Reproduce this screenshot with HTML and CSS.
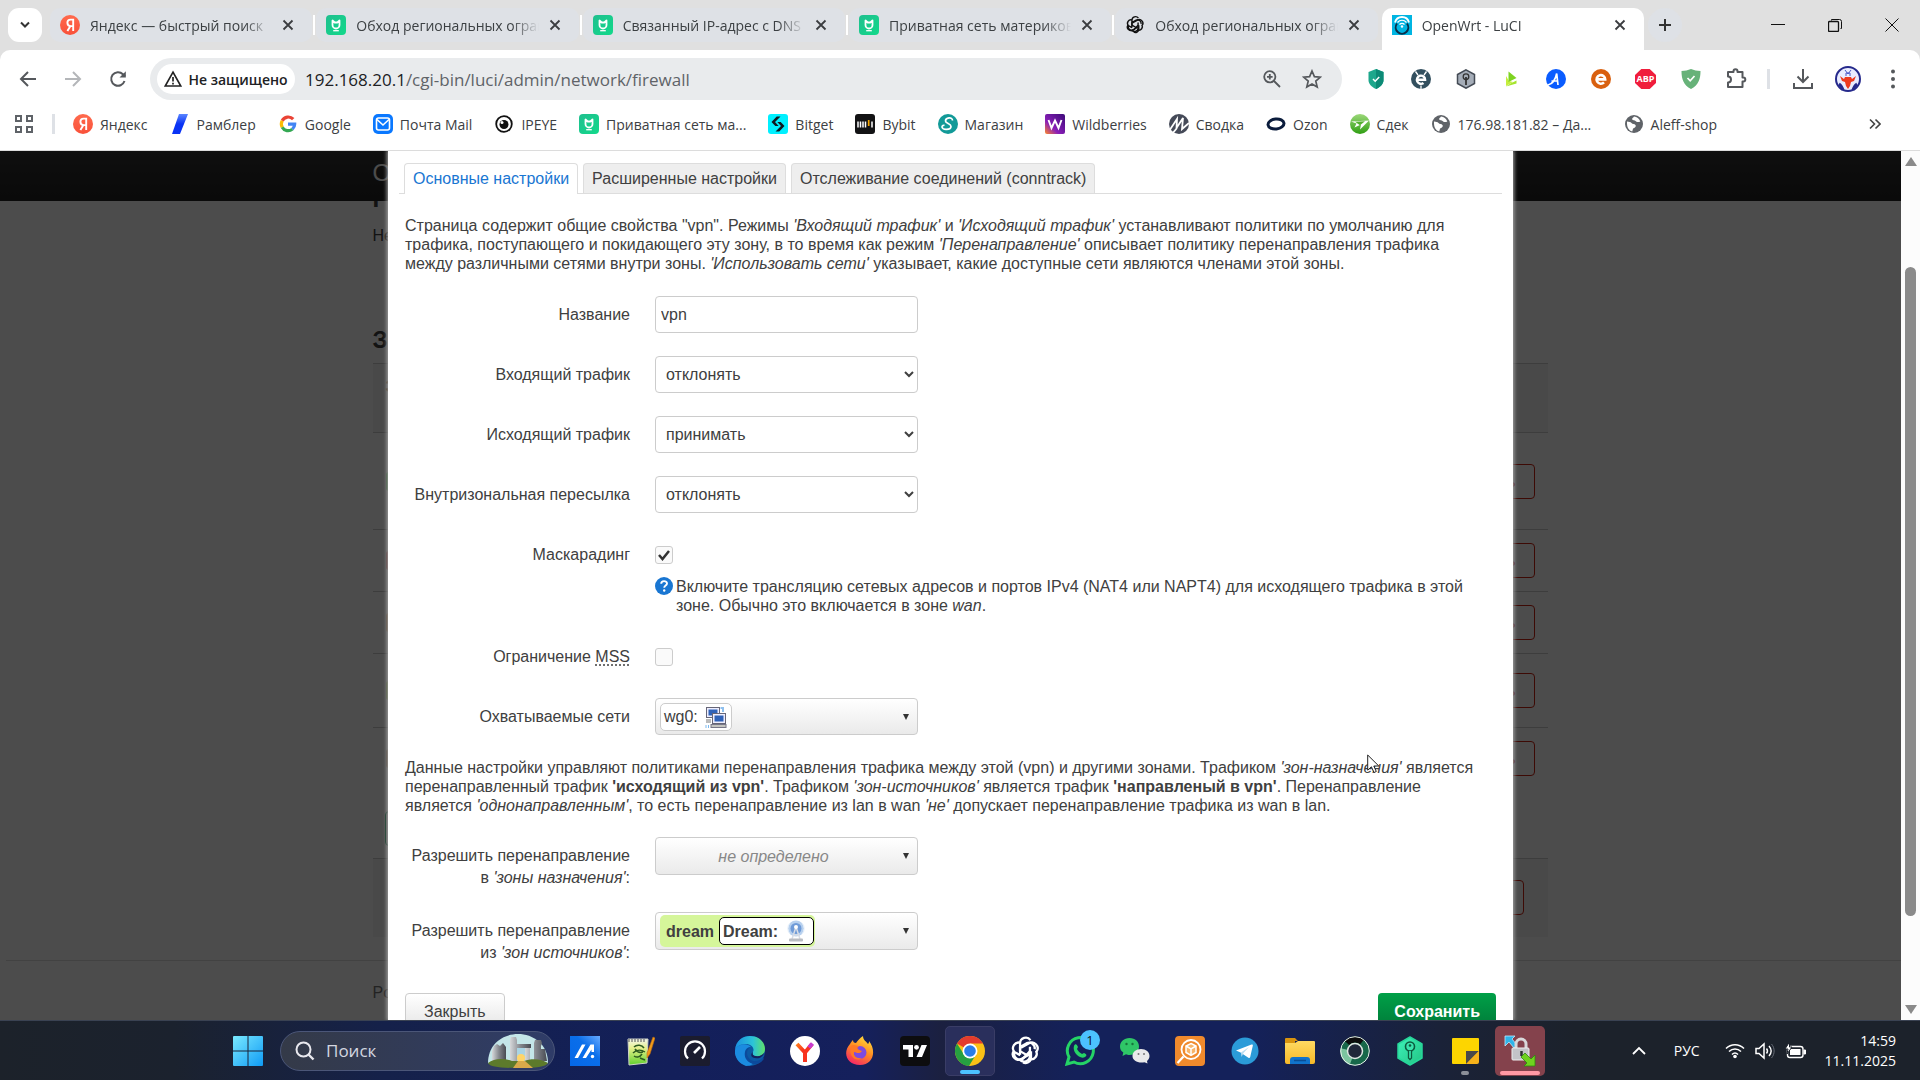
FILE: index.html
```html
<!DOCTYPE html>
<html lang="ru">
<head>
<meta charset="utf-8">
<title>OpenWrt - LuCI</title>
<link rel="stylesheet" href="styles.css">
</head>
<body>
<svg class="defs" width="0" height="0" aria-hidden="true">
  <defs>
    <linearGradient id="g-ya" x2="0" y2="1"><stop stop-color="#ff6a4d"/><stop offset="1" stop-color="#f9513a"/></linearGradient>
    <linearGradient id="g-mi" x2="1" y2="1"><stop stop-color="#1fbf8f"/><stop offset="1" stop-color="#12d98a"/></linearGradient>
    <linearGradient id="g-ram" x2="0" y2="1"><stop stop-color="#5b86ff"/><stop offset=".5" stop-color="#0a33f5"/><stop offset="1" stop-color="#0a33f5"/></linearGradient>
    <linearGradient id="g-wb" x1="0" y1="1" x2="1" y2="0"><stop stop-color="#ff8a2a"/><stop offset=".35" stop-color="#8a1fb8"/><stop offset="1" stop-color="#3c0a78"/></linearGradient>
    <linearGradient id="g-win" x2="1" y2="1"><stop stop-color="#7ae9ff"/><stop offset="1" stop-color="#0f9bf5"/></linearGradient>
    <linearGradient id="g-edge" x2="1" y2="0"><stop stop-color="#1a8fe0"/><stop offset=".6" stop-color="#2cc3d8"/><stop offset="1" stop-color="#5fe06a"/></linearGradient>
    <linearGradient id="g-ff" x1=".8" y1="0" x2=".3" y2="1"><stop stop-color="#ffe23e"/><stop offset=".5" stop-color="#ff8a22"/><stop offset="1" stop-color="#f52667"/></linearGradient>
    <linearGradient id="g-asus" x1="0" y1="1" x2="1" y2="0"><stop stop-color="#0568e8"/><stop offset=".6" stop-color="#0a6eea"/><stop offset="1" stop-color="#68abff"/></linearGradient>
    <linearGradient id="g-yb" x2="1" y2="1"><stop stop-color="#ff7a1a"/><stop offset=".4" stop-color="#f8331e"/><stop offset="1" stop-color="#f8331e"/></linearGradient>
    <linearGradient id="g-fold" x2="0" y2="1"><stop stop-color="#ffda62"/><stop offset="1" stop-color="#f7b928"/></linearGradient>
    <linearGradient id="g-key" x2="1" y2="1"><stop stop-color="#3ef2ba"/><stop offset="1" stop-color="#22c483"/></linearGradient>
    <linearGradient id="g-sdek" x2="0" y2="1"><stop stop-color="#9cd87a"/><stop offset="1" stop-color="#2f9e12"/></linearGradient>
    <linearGradient id="g-stone" x2="1" y2="0"><stop stop-color="#d6d8da"/><stop offset=".5" stop-color="#84878d"/><stop offset="1" stop-color="#484b52"/></linearGradient>
    <linearGradient id="g-note" x2="0" y2="1"><stop stop-color="#f4f6ef"/><stop offset=".35" stop-color="#e6f08c"/><stop offset="1" stop-color="#5fd02c"/></linearGradient>
  </defs>
  <symbol id="i-x" viewBox="0 0 12 12"><path d="M1.500 1.500l9 9M10.500 1.500l-9 9" stroke="#3b3d40" stroke-width="1.800" fill="none"/></symbol>
  <symbol id="i-ya" viewBox="0 0 20 20"><circle cx="10" cy="10" r="10" fill="url(#g-ya)"/><path d="M13.200 16V4.600h-2.600c-2 0-3.200 1.300-3.200 3.200 0 1.900 1.200 3.300 3.400 3.300h2.200M10.300 11.200L7.400 16" stroke="#fff" stroke-width="1.900" fill="none"/></symbol>
  <symbol id="i-mi" viewBox="0 0 20 20"><rect width="20" height="20" rx="4" fill="url(#g-mi)"/><path d="M6.500 5.500v4.500a3.500 3.500 0 0 0 7 0V5.500l-2.200 2H8.700z" fill="none" stroke="#fff" stroke-width="1.800" stroke-linejoin="round"/><path d="M7.200 15.700h5.600" stroke="#fff" stroke-width="1.300"/></symbol>
  <symbol id="i-gpt" viewBox="0 0 24 24"><g fill="none" stroke="currentColor" stroke-width="1.700" stroke-linejoin="round"><path d="M13.900 15.300l-5.600-3.200V6.300a4.300 4.300 0 0 1 7.800-2.500M8.300 9l5-2.900a4.300 4.300 0 0 1 6 4.600"/><path d="M9 9.600l6-3.400a4.300 4.300 0 0 1 5.600 6.300"/><path d="M15.700 8.900v6.600a4.300 4.300 0 0 1-7.900 2.400"/><path d="M15.700 12.300l-5.400 5.600a4.300 4.300 0 0 1-6.300-4.800"/><path d="M15.200 14.600l-5.600 3.200A4.300 4.300 0 0 1 3.500 12"/><path d="M8.300 14.900V8.700M8.400 5.800A4.300 4.300 0 0 0 4 12.700l4.400 2.500"/><path d="M20.200 11.800a4.300 4.300 0 0 1-4.600 6.400"/><path d="M10.500 20.600a4.300 4.300 0 0 0 6-2.600v-5.800"/></g></symbol>
  <symbol id="i-globe" viewBox="0 0 20 20"><circle cx="10" cy="10" r="9" fill="#5f6368"/><path d="M3 7.500c2 .3 3.500.2 4.500 1.600 1 1.400 3 .6 4 1.800 1 1.400-.6 2.700-2 3.300-1 .6-.6 2-1.300 3.300C5 16.500 2.700 14 3 7.500zM10 2.500c-.8 1.500-2.300 1.700-1.800 3 .6 1.200 2.600.3 3.400 1.500.8 1.200 3 1.300 4.700.4C15.200 4.500 13 2.800 10 2.500z" fill="#fff"/></symbol>
  <symbol id="i-wrt" viewBox="0 0 20 20"><rect width="20" height="20" fill="#00b5e2"/><path d="M3 7.500C4 3.500 7 2 10 2s6 1.500 7 5.500" fill="none" stroke="#fff" stroke-width="1.800"/><path d="M5 8.500a6.300 6.300 0 1 0 10 0" fill="none" stroke="#0b2f4a" stroke-width="2"/><path d="M5.500 7.500c2.500-3 6.500-3 9 0M7.500 9.500c1.500-1.600 3.500-1.600 5 0" fill="none" stroke="#fff" stroke-width="1.200"/><circle cx="10" cy="11.500" r="1.200" fill="#fff"/></symbol>
</svg>

<header class="chrome">
  <div class="tabstrip">
    <button class="tabsearch" aria-label="Поиск вкладок"><svg width="12" height="12" viewBox="0 0 12 12"><path d="M2 3.500l4 4 4-4" fill="none" stroke="#333" stroke-width="2"/></svg></button>
    <div class="tabs">
      <div class="tab"><svg width="20" height="20"><use href="#i-ya"/></svg><span>Яндекс — быстрый поиск</span><button aria-label="Закрыть вкладку"><svg width="12" height="12"><use href="#i-x"/></svg></button></div>
      <div class="tab"><svg width="20" height="20"><use href="#i-mi"/></svg><span>Обход региональных ограничений</span><button aria-label="Закрыть вкладку"><svg width="12" height="12"><use href="#i-x"/></svg></button></div>
      <div class="tab"><svg width="20" height="20"><use href="#i-mi"/></svg><span>Связанный IP-адрес с DNS</span><button aria-label="Закрыть вкладку"><svg width="12" height="12"><use href="#i-x"/></svg></button></div>
      <div class="tab"><svg width="20" height="20"><use href="#i-mi"/></svg><span>Приватная сеть материковая</span><button aria-label="Закрыть вкладку"><svg width="12" height="12"><use href="#i-x"/></svg></button></div>
      <div class="tab last"><svg class="dark" width="20" height="20"><use href="#i-gpt"/></svg><span>Обход региональных ограничений</span><button aria-label="Закрыть вкладку"><svg width="12" height="12"><use href="#i-x"/></svg></button></div>
      <div class="tab active"><svg width="20" height="20"><use href="#i-wrt"/></svg><span>OpenWrt - LuCI</span><button aria-label="Закрыть вкладку"><svg width="12" height="12"><use href="#i-x"/></svg></button></div>
    </div>
    <button class="newtab" aria-label="Новая вкладка"><svg width="14" height="14" viewBox="0 0 14 14"><path d="M7 1v12M1 7h12" stroke="#333" stroke-width="2"/></svg></button>
    <div class="winbtns">
      <button aria-label="Свернуть"><svg width="14" height="14" viewBox="0 0 14 14"><path d="M0 6.500h14" stroke="#111"/></svg></button>
      <button aria-label="Свернуть в окно"><svg width="14" height="14" viewBox="0 0 14 14"><path d="M3.500 2.500v-1h8a2 2 0 0 1 2 2v7h-1" fill="none" stroke="#111"/><rect x=".5" y="3.500" width="10" height="10" rx="1" fill="none" stroke="#111" stroke-width="1.300"/></svg></button>
      <button aria-label="Закрыть"><svg width="14" height="14" viewBox="0 0 14 14"><path d="M.5.5l13 13M13.500.5l-13 13" stroke="#111"/></svg></button>
    </div>
  </div>

  <div class="toolbar">
    <div class="nav">
      <button aria-label="Назад"><svg width="20" height="20" viewBox="0 0 20 20"><path d="M18 10H3M10 3l-7 7 7 7" fill="none" stroke="#55585c" stroke-width="2"/></svg></button>
      <button aria-label="Вперёд"><svg width="20" height="20" viewBox="0 0 20 20"><path d="M2 10h15M10 3l7 7-7 7" fill="none" stroke="#b4b6b9" stroke-width="2"/></svg></button>
      <button aria-label="Обновить"><svg width="20" height="20" viewBox="0 0 20 20"><path d="M16.500 12a6.800 6.800 0 1 1-1.600-6.800L17 7.300" fill="none" stroke="#55585c" stroke-width="2"/><path d="M17.800 2.200v6.300h-6.300z" fill="#55585c"/></svg></button>
    </div>
    <div class="omnibox">
      <button class="insecure"><svg width="18" height="18" viewBox="0 0 18 18"><path d="M9 2.200L16.800 16H1.200z" fill="none" stroke="#222" stroke-width="1.700"/><path d="M9 7v4.500M9 12.700v1.800" stroke="#222" stroke-width="1.700"/></svg>Не защищено</button>
      <span class="url"><b>192.168.20.1</b>/cgi-bin/luci/admin/network/firewall</span>
      <button aria-label="Масштаб"><svg width="20" height="20" viewBox="0 0 20 20"><circle cx="7.800" cy="7.800" r="5.600" fill="none" stroke="#55585c" stroke-width="1.800"/><path d="M12 12l6 6M7.800 5v5.600M5 7.800h5.600" stroke="#55585c" stroke-width="1.800"/></svg></button>
      <button aria-label="Добавить в закладки"><svg width="20" height="20" viewBox="0 0 20 20"><path d="M10 2l2.400 5.600 6 .5-4.600 4 1.400 5.900L10 14.900 4.800 18l1.400-5.900-4.600-4 6-.5z" fill="none" stroke="#55585c" stroke-width="1.700"/></svg></button>
    </div>
    <div class="exts">
      <button aria-label="Щит"><svg width="20" height="20" viewBox="0 0 20 20"><path d="M10 0l7.500 3v8c0 4-3 7-7.500 9-4.500-2-7.500-5-7.500-9V3z" fill="#1da78c"/><path d="M10 0l7.500 3v8c0 4-3 7-7.500 9z" fill="#0c8a76"/><path d="M7 10l2.200 2.200L13.200 8" fill="none" stroke="#fff" stroke-width="1.500"/></svg></button>
      <button aria-label="Сканер"><svg width="20" height="20" viewBox="0 0 20 20"><circle cx="10" cy="10" r="10" fill="#33505f"/><path d="M6.200 10.700h7.900A4.100 4.100 0 1 0 12.500 14" fill="none" stroke="#fff" stroke-width="2.400"/><path d="M4.500 2.500L7 6M15.500 2.500L13 6M10 16.500V20" stroke="#fff" stroke-width="1.300"/></svg></button>
      <button aria-label="Ключ"><svg width="20" height="20" viewBox="0 0 20 20"><path d="M10 .8l8.500 4.700v9L10 19.200 1.500 14.500v-9z" fill="#a5adb8" stroke="#444b55" stroke-width="1.500"/><circle cx="10" cy="7.700" r="2.800" fill="none" stroke="#333" stroke-width="1.300"/><path d="M10 8v8" stroke="#333" stroke-width="1.800"/></svg></button>
      <button aria-label="Воспроизвести"><svg width="20" height="20" viewBox="0 0 20 20"><path d="M5 7v10l7-4-4-1z" fill="#c5ee3c"/><path d="M7.500 2.500l8 6.500-8 4z" fill="#7ed321"/><path d="M5 17.500l10.500-3v-3l-6 3z" fill="#a5e52c"/></svg></button>
      <button aria-label="Переводчик"><svg width="20" height="20" viewBox="0 0 20 20"><circle cx="10" cy="10" r="10" fill="#0a5cff"/><path d="M2 16c4-1 7.500-5.500 8.700-11.500L12 16M5.500 12h6.500" fill="none" stroke="#fff" stroke-width="1.700"/></svg></button>
      <button aria-label="Кэшбэк"><svg width="20" height="20" viewBox="0 0 20 20"><circle cx="10" cy="10" r="10" fill="#d9600f"/><path d="M5.700 10.400h8.500A4.300 4.300 0 1 0 13 13.400" fill="none" stroke="#fff" stroke-width="2.600"/></svg></button>
      <button class="abp"><span>ABP</span></button>
      <button aria-label="Защита"><svg width="20" height="20" viewBox="0 0 20 20"><path d="M10 0c3 1.200 6 2 9.500 2 0 8-2 14-9.500 18C2.500 16 .5 10 .5 2 4 2 7 1.200 10 0z" fill="#67b279"/><path d="M6.500 9l2.700 2.800L13.500 7" fill="none" stroke="#fff" stroke-width="1.700"/></svg></button>
      <button aria-label="Расширения"><svg width="22" height="22" viewBox="0 0 22 22"><path d="M3 4h5.500V3.200a2 2 0 0 1 4 0V4h5v5.500h.8a2 2 0 0 1 0 4h-.8V19H3v-4.500a3 3 0 0 0 0-6z" fill="none" stroke="#55585c" stroke-width="2" stroke-linejoin="round"/></svg></button>
    </div>
    <i class="vline"></i>
    <div class="exts">
      <button aria-label="Загрузки"><svg width="20" height="20" viewBox="0 0 20 20"><path d="M10 0v12M4.500 7.500L10 13l5.500-5.500M1 14v5h18v-5" fill="none" stroke="#55585c" stroke-width="2"/></svg></button>
      <button aria-label="Профиль"><svg width="26" height="26" viewBox="0 0 26 26"><circle cx="13" cy="13" r="12" fill="#e9ecff" stroke="#262a8c" stroke-width="2"/><path d="M4 18c2 1 3 3 4 6M22 18c-2 1-3 3-4 6" stroke="#262a8c" stroke-width="3" fill="none"/><path d="M5 10l4 3 1-2h6l1 2 4-3-2 5-3 1-1 4-2 3-2-3-1-4-3-1z" fill="#ee3a1f"/><path d="M10 4l3 4 3-4M11 10V7h4v3" stroke="#4a58c8" fill="none"/></svg></button>
      <button aria-label="Меню"><svg width="20" height="20" viewBox="0 0 20 20"><g fill="#55585c"><circle cx="10" cy="2.500" r="2"/><circle cx="10" cy="10" r="2"/><circle cx="10" cy="17.500" r="2"/></g></svg></button>
    </div>
  </div>

  <nav class="bookmarks">
    <button class="apps" aria-label="Сервисы"><svg width="18" height="18" viewBox="0 0 18 18"><path d="M1 1h5v5H1zM12 1h5v5h-5zM1 12h5v5H1zM12 12h5v5h-5z" fill="none" stroke="#5f6368" stroke-width="2"/></svg></button>
    <i class="vline"></i>
    <div class="marks">
      <a href="#"><svg width="20" height="20"><use href="#i-ya"/></svg>Яндекс</a>
      <a href="#"><svg width="20" height="20" viewBox="0 0 20 20"><path d="M9 0h9l-8 20H2z" fill="url(#g-ram)"/></svg>Рамблер</a>
      <a href="#"><svg width="20" height="20" viewBox="0 0 20 20"><g fill="none" stroke-width="3.200"><path d="M15.200 5.200A6.700 6.700 0 0 0 4.200 6.800" stroke="#ea4335"/><path d="M4.200 6.800a6.700 6.700 0 0 0 0 6.400" stroke="#fbbc05"/><path d="M4.200 13.200a6.700 6.700 0 0 0 10.200 1.900" stroke="#34a853"/><path d="M14.400 15.100a6.500 6.500 0 0 0 2.300-5H10" stroke="#4285f4"/></g></svg>Google</a>
      <a href="#"><svg width="20" height="20" viewBox="0 0 20 20"><rect width="20" height="20" rx="5" fill="#0a78ff"/><rect x="3.500" y="4" width="13" height="12" rx="2" fill="none" stroke="#fff" stroke-width="1.600"/><path d="M4 5.500l6 5.500 6-5.500" fill="none" stroke="#fff" stroke-width="1.600"/></svg>Почта Mail</a>
      <a href="#"><svg width="20" height="20" viewBox="0 0 20 20"><circle cx="10" cy="10" r="7.800" fill="none" stroke="#111" stroke-width="1.800"/><circle cx="10" cy="10.500" r="4.500" fill="#111"/><circle cx="8" cy="8.500" r="1.500" fill="#fff"/></svg>IPEYE</a>
      <a href="#"><svg width="20" height="20"><use href="#i-mi"/></svg>Приватная сеть ма...</a>
      <a href="#"><svg width="20" height="20" viewBox="0 0 20 20"><rect width="20" height="20" rx="3" fill="#00f0ff"/><path d="M12.500 2.500H8.700L3.500 8l3.800 4h3.400L7 8zM7.500 17.500h3.800L16.500 12l-3.800-4H9.300l3.700 4z" fill="#101820"/></svg>Bitget</a>
      <a href="#"><svg width="20" height="20" viewBox="0 0 20 20"><rect width="20" height="20" rx="3" fill="#121214"/><path d="M3 7.500v6M5.500 7.500v6M8 7.500v6M10.500 7.500v6M17 7.500v6" stroke="#fff" stroke-width="1.500"/><path d="M13.700 6v6" stroke="#f7a600" stroke-width="1.700"/></svg>Bybit</a>
      <a href="#"><svg width="20" height="20" viewBox="0 0 20 20"><circle cx="10" cy="10" r="10" fill="#129a98"/><path d="M14.500 6.500c0-4-7-3-7 .5 0 2.700 5.500 2.500 5.500 5.500 0 3.500-8.500 4-9 .5 0-1.500 1.500-2 2.500-1.500" fill="none" stroke="#fff" stroke-width="1.700"/></svg>Магазин</a>
      <a href="#"><svg width="20" height="20" viewBox="0 0 20 20"><rect width="20" height="20" rx="2" fill="url(#g-wb)"/><path d="M3.500 6l3 8L10 6.500l3.500 7.500 3-8" fill="none" stroke="#fff" stroke-width="1.900"/></svg>Wildberries</a>
      <a href="#"><svg width="20" height="20" viewBox="0 0 20 20"><circle cx="10" cy="10" r="10" fill="#454a58"/><path d="M0 17L8 5l-.5 9L14 4l-1 11 7-6M3 20l5-6" fill="none" stroke="#fff" stroke-width="1.800"/></svg>Сводка</a>
      <a href="#"><svg width="20" height="20" viewBox="0 0 20 20"><ellipse cx="10" cy="10" rx="8" ry="5" fill="none" stroke="#0b1c3c" stroke-width="3" transform="rotate(-6 10 10)"/></svg>Ozon</a>
      <a href="#"><svg width="20" height="20" viewBox="0 0 20 20"><circle cx="10" cy="10" r="10" fill="url(#g-sdek)"/><path d="M1 7.500l18-1-9 9 1-5-6.500 3 2-4z" fill="#fff"/><path d="M5 7.800l10-.5-5 4z" fill="#54b030"/></svg>Сдек</a>
      <a class="wide" href="#"><svg width="20" height="20"><use href="#i-globe"/></svg>176.98.181.82 – Да...</a>
      <a href="#"><svg width="20" height="20"><use href="#i-globe"/></svg>Aleff-shop</a>
    </div>
    <button class="more" aria-label="Другие закладки"><svg width="12" height="12" viewBox="0 0 12 12"><path d="M1 1.500L5.500 6 1 10.500M6.500 1.500L11 6l-4.500 4.500" fill="none" stroke="#444" stroke-width="1.600"/></svg></button>
  </nav>
</header>

<main class="viewport">
  <div class="luci" inert>
    <div class="navbar"><div class="wrap"><a href="#">OpenWrt</a></div></div>
    <div class="wrap">
      <h3 class="offload">Разгрузка маршрутизации/NAT</h3>
      <p class="descr">Не полностью совместимо с QoS/SQM.</p>
      <h3>Зоны</h3>
      <table class="zones">
        <tr class="h69"><th>Зона</th><th></th></tr>
        <tr class="h97"><td><span class="zone lan">lan</span></td><td><button class="del">Удалить</button></td></tr>
        <tr class="h62"><td><span class="zone wan">wan</span></td><td><button class="del">Удалить</button></td></tr>
        <tr class="h62"><td><span class="zone guest">vpn</span></td><td><button class="del">Удалить</button></td></tr>
        <tr class="h74"><td><span class="zone dream">dream</span></td><td><button class="del">Удалить</button></td></tr>
        <tr class="h62"><td><span class="zone other">docker</span></td><td><button class="del">Удалить</button></td></tr>
      </table>
      <div class="addrow"><button class="add">Добавить</button></div>
      <div class="actions"><button class="del">Сбросить</button></div>
    </div>
    <footer><div class="wrap">Powered by LuCI</div></footer>
  </div>

  <div class="overlay">
    <section class="modal">
      <ul class="cbi-tabs">
        <li class="on"><a href="#">Основные настройки</a></li>
        <li><a href="#">Расширенные настройки</a></li>
        <li><a href="#">Отслеживание соединений (conntrack)</a></li>
      </ul>
      <p class="text">Страница содержит общие свойства "vpn". Режимы <em>'Входящий трафик'</em> и <em>'Исходящий трафик'</em> устанавливают политики по умолчанию для трафика, поступающего и покидающего эту зону, в то время как режим <em>'Перенаправление'</em> описывает политику перенаправления трафика между различными сетями внутри зоны. <em>'Использовать сети'</em> указывает, какие доступные сети являются членами этой зоны.</p>
      <form class="fields">
        <div class="row"><label for="name">Название</label><input class="ctl" id="name" type="text" value="vpn"></div>
        <div class="row"><label for="inp">Входящий трафик</label><select class="ctl" id="inp"><option>отклонять</option></select></div>
        <div class="row"><label for="out">Исходящий трафик</label><select class="ctl" id="out"><option>принимать</option></select></div>
        <div class="row"><label for="fwd">Внутризональная пересылка</label><select class="ctl" id="fwd"><option>отклонять</option></select></div>
        <div class="row"><label for="masq">Маскарадинг</label><div><input id="masq" type="checkbox" checked><p class="help"><svg width="18" height="18" viewBox="0 0 18 18"><circle cx="9" cy="9" r="9" fill="#1976d2"/><path d="M6.200 6.800c0-3.600 5.800-3.400 5.800-.3 0 2-2.800 2-2.800 4.200" fill="none" stroke="#fff" stroke-width="1.900"/><circle cx="9.200" cy="13.500" r="1.200" fill="#fff"/></svg><span>Включите трансляцию сетевых адресов и портов IPv4 (NAT4 или NAPT4) для исходящего трафика в этой зоне. Обычно это включается в зоне <em>wan</em>.</span></p></div></div>
        <div class="row"><label for="mss">Ограничение <abbr title="Maximum Segment Size">MSS</abbr></label><div><input id="mss" type="checkbox"></div></div>
        <div class="row"><span class="label" id="l-net">Охватываемые сети</span><button type="button" class="ctl dd" aria-labelledby="l-net"><span class="badge">wg0: <svg width="22" height="22" viewBox="0 0 22 22"><rect x="1.500" y="1.500" width="13" height="10" fill="#eef" stroke="#667"/><rect x="3.500" y="3.500" width="9" height="6" fill="#2f62b8"/><path d="M15.500 2h2.500v4" fill="none" stroke="#8fc0ee" stroke-width="2"/><path d="M1 13h5v4H1z" fill="#bbb"/><rect x="7.500" y="7.500" width="13" height="10" fill="#eef" stroke="#667"/><rect x="9.500" y="9.500" width="9" height="6" fill="#2f62b8"/><rect x="6" y="18.500" width="15" height="3" fill="#c5c5c0" stroke="#778"/><path d="M1 19v3M3.500 19v3" stroke="#7ab8ee"/></svg></span><i class="tri"></i></button></div>
      </form>
      <p class="text second">Данные настройки управляют политиками перенаправления трафика между этой (vpn) и другими зонами. Трафиком <em>'зон-назначения'</em> является перенаправленный трафик <strong>'исходящий из vpn'</strong>. Трафиком <em>'зон-источников'</em> является трафик <strong>'направленый в vpn'</strong>. Перенаправление является <em>'однонаправленным'</em>, то есть перенаправление из lan в wan <em>'не'</em> допускает перенаправление трафика из wan в lan.</p>
      <div class="fields">
        <div class="row tall"><span class="label" id="l-dst">Разрешить перенаправление в <em>'зоны назначения'</em>:</span><button type="button" class="ctl dd" aria-labelledby="l-dst"><em class="none">не определено</em><i class="tri"></i></button></div>
        <div class="row tall"><span class="label" id="l-src">Разрешить перенаправление из <em>'зон источников'</em>:</span><button type="button" class="ctl dd" aria-labelledby="l-src"><span class="zonebadge">dream <span class="badge">Dream: <svg width="22" height="22" viewBox="0 0 22 22"><circle cx="11" cy="8.500" r="8" fill="#b7d0ee"/><circle cx="11" cy="8.500" r="5.500" fill="#6f9bd8"/><path d="M5 3a8 8 0 0 0 0 11M17 3a8 8 0 0 1 0 11" fill="none" stroke="#e5effa"/><path d="M11 7l-4 12M11 7l4 12M8 15h6" stroke="#d8dde5" stroke-width="1.500"/><circle cx="11" cy="7" r="2" fill="#fff"/><rect x="4" y="18.500" width="14" height="3" rx="1" fill="#b9bcc2"/></svg></span></span><i class="tri"></i></button></div>
      </div>
      <div class="buttons"><button class="btn">Закрыть</button><button class="btn save">Сохранить</button></div>
    </section>
  </div>

  <div class="scrollbar"><i class="up"></i><i class="thumb"></i><i class="down"></i></div>
  <svg class="cursor" width="14" height="20" viewBox="0 0 14 20"><path d="M.7 1v15.200l3.700-3.400 2.600 5.700 2.300-1L6.800 12h5z" fill="#fff" stroke="#222"/></svg>
</main>

<footer class="taskbar">
  <div class="apps-row">
    <button class="start" aria-label="Пуск"><svg width="30" height="30" viewBox="0 0 30 30"><path d="M0 1a1 1 0 0 1 1-1h13.500v14.500H0zM15.500 0H29a1 1 0 0 1 1 1v13.500H15.500zM0 15.500h14.500V30H1a1 1 0 0 1-1-1zM15.500 15.500H30V29a1 1 0 0 1-1 1H15.500z" fill="url(#g-win)"/></svg></button>
    <label class="search"><svg width="20" height="20" viewBox="0 0 20 20"><circle cx="8.500" cy="8.500" r="7" fill="none" stroke="#e8e8ee" stroke-width="2"/><path d="M13.500 13.500l5 5" stroke="#e8e8ee" stroke-width="2.400"/></svg><input type="text" placeholder="Поиск" aria-label="Поиск">
      <svg width="62" height="34" viewBox="0 0 62 34"><path d="M1 29C1 10 16 0 31 0s30 10 30 29c-8 5-52 5-60 0z" fill="#c4e6e8"/><g fill="url(#g-stone)"><path d="M5 17l2-5 3-2 3 2 2 6v12H5zM12 13l4-4 3 4v17h-7z"/><path d="M23 6l1-3h5l1 3v24h-7zM30 10h14v4H30z"/><path d="M38 14h5v13h-5zM47 9l1-3h6l1 3-1 3v17h-7zM54 15h4l2 12h-6z"/></g><path d="M30 14h8v13h-8z" fill="#a9d4e4"/><path d="M1 29c6-5 16-5 24-2h12c8-3 18-2 24 2-2 4-12 5-30 5S3 33 1 29z" fill="#5d7a2b"/><circle cx="34" cy="24" r="4" fill="#ffd56a"/><path d="M31 27h7l8 7H26z" fill="#d9a94a"/></svg>
    </label>
    <button aria-label="MyASUS"><svg width="30" height="30" viewBox="0 0 30 30"><rect width="30" height="30" fill="url(#g-asus)"/><path d="M4.500 22L12 8.500h3.500L8 22zM12.500 22l8-13.500H24V16h-2.500v-2.500L16 22z" fill="#fff"/><circle cx="22.500" cy="20.500" r="1.700" fill="#fff"/></svg></button>
    <button aria-label="Notepad++"><svg width="30" height="30" viewBox="0 0 30 30"><path d="M3 3h20l-1 24-18 2z" fill="url(#g-note)" stroke="#cfd3c8"/><path d="M9 11c3-3 8-2 10 1M8 17c4-4 9-3 12-1M9 20c3 2 6 1 8-2M10 13c2 3 5 4 8 3M15 22l5 2" fill="none" stroke="#2c5a20" stroke-width="1.500"/><path d="M4 3v3M7 3v3M10 3v3M13 3v3M16 3v3M19 3v3" stroke="#555"/><path d="M28 1l2 1-5 16-3 4v-5z" fill="#f09a1a" stroke="#b86a10" stroke-width=".6"/></svg></button>
    <button aria-label="Speedtest"><svg width="30" height="30" viewBox="0 0 30 30"><rect width="30" height="30" rx="2" fill="#1b1c2e"/><path d="M8 22.500a10 10 0 1 1 14 0" fill="none" stroke="#fff" stroke-width="2.200"/><path d="M14 17l6-6" stroke="#fff" stroke-width="2.600"/></svg></button>
    <button aria-label="Edge"><svg width="30" height="30" viewBox="0 0 30 30"><circle cx="15" cy="15" r="15" fill="#0c59a4"/><path d="M0 14C1 4 8 0 15 0c9 0 15 6 15 13 0 5-4 8-9 7-3 0-4-2-3-4 2-4-2-8-7-8-5 0-9 2-11 6z" fill="url(#g-edge)"/><path d="M0 14c2-6 12-8 16-3-8 0-9 12 2 17-2 1-4 2-7 2C4 28-1 21 0 14z" fill="#1b8be0"/><path d="M16 11c-7 3-4 14 4 14 3 0 6-1 8-3 1 0 1 1 0 2-4 6-13 5-17-1-3-5 0-12 5-12z" fill="#0c4a9c"/><path d="M18 16c-1 2 0 4 3 4 3 1 6-1 8-3-1 4-5 6-9 5-4 0-5-4-2-6z" fill="#14205a"/></svg></button>
    <button aria-label="Яндекс Браузер"><svg width="30" height="30" viewBox="0 0 30 30"><circle cx="15" cy="15" r="15" fill="#fff"/><path d="M7 8l8 8.500L22 8M15 15v11" fill="none" stroke="url(#g-yb)" stroke-width="4"/><path d="M19 11.500L22.500 7.500" stroke="#c83cd0" stroke-width="4"/></svg></button>
    <button aria-label="Firefox"><svg width="30" height="30" viewBox="0 0 30 30"><path d="M5 8c1-2 2-3 3-4 0 2 1 3 3 3 2-3 4-5 7-7 0 4 3 5 5 8 1-1 1-2 1-3 8 10 4 24-9 24C2 29-3 17 5 8z" fill="url(#g-ff)"/><circle cx="15" cy="16.500" r="6.500" fill="#7d4be0"/><path d="M6 10c3-2 5 0 8 0-3 2-1 4 3 5-3 4-6 1-8 1-1 4 3 7 8 6-7 5-14-3-11-12z" fill="#ff7a26"/></svg></button>
    <button aria-label="TradingView"><svg width="30" height="30" viewBox="0 0 30 30"><rect width="30" height="30" rx="4" fill="#0d0d0f"/><path d="M3 9h10v12H8.500v-7.500H3zM21.500 9H27l-5 12h-5.500z" fill="#fff"/><circle cx="16.500" cy="11.300" r="2.400" fill="#fff"/></svg></button>
    <button class="running" aria-label="Chrome"><svg width="30" height="30" viewBox="0 0 30 30"><circle cx="15" cy="15" r="15" fill="#fbc116"/><path d="M15 15L2 7.500A15 15 0 0 1 28 7.500H15z" fill="#e33b2e"/><path d="M2 7.500A15 15 0 0 0 14 30l7-11.500H9z" fill="#26a041"/><circle cx="15" cy="15" r="7.500" fill="#fff"/><circle cx="15" cy="15" r="5.800" fill="#2a7de8"/></svg></button>
    <button class="light" aria-label="ChatGPT"><svg width="32" height="32"><use href="#i-gpt"/></svg></button>
    <button class="wa" aria-label="WhatsApp"><svg width="30" height="30" viewBox="0 0 30 30"><path d="M2 28l2-7a13 13 0 1 1 5 5z" fill="none" stroke="#25d366" stroke-width="3"/><path d="M9 10c1-3 3-2 4 1l-1 2c1 2 3 4 5 5l2-1c3 1 3 3 1 4-5 3-13-5-11-11z" fill="#25d366"/></svg><span>1</span></button>
    <button aria-label="WeChat"><svg width="30" height="30" viewBox="0 0 30 30"><path d="M9.500 2c6 0 9.500 4 9.500 8.500S15 19 9.500 19c-1.500 0-2.500-.3-3.500-.7L2.500 20l.8-3.500C1 15 0 13 0 10.500 0 6 4 2 9.500 2z" fill="#2fc667"/><path d="M21 13c5 0 8.500 3 8.500 7 0 2-1 3.800-2.500 5l.5 2.500-3-1.300c-6 1.500-12-1.500-12-6.200 0-4 3.500-7 8.500-7z" fill="#e9e9ea"/><g fill="#16753a"><circle cx="6.500" cy="8" r="1.200"/><circle cx="12.500" cy="8" r="1.200"/></g><g fill="#777"><circle cx="18.500" cy="18" r="1"/><circle cx="24" cy="18" r="1"/></g></svg></button>
    <button aria-label="Трекер посылок"><svg width="30" height="30" viewBox="0 0 30 30"><rect width="30" height="30" rx="4" fill="#f08a2c"/><circle cx="16" cy="13.500" r="9.500" fill="none" stroke="#fff" stroke-width="1.800"/><path d="M8.500 20.500L2.500 27" stroke="#fff" stroke-width="2.200"/><path d="M16 7.500l5 2.500v6.500l-5 3-5-3V10z" fill="#f7b56a" stroke="#fff" stroke-width="1.500"/><path d="M11 10l5 3 5-3M16 13v6" fill="none" stroke="#fff" stroke-width="1.500"/></svg></button>
    <button aria-label="Telegram"><svg width="28" height="28" viewBox="0 0 28 28"><circle cx="14" cy="14" r="13.500" fill="#2b9bd8"/><path d="M5 13.500L20.500 7.500c1-.3 1.500.2 1.300 1.300L19.200 20c-.3 1-1 1.200-1.800.7L9.500 15.500z" fill="#fff"/><path d="M10 15.500l8-5.500-5.500 6-2 4z" fill="#b9dcf0"/></svg></button>
    <button aria-label="Проводник"><svg width="30" height="30" viewBox="0 0 30 30"><path d="M0 3a1 1 0 0 1 1-1h9l3 3h-3v5H0z" fill="#d9940e"/><path d="M0 7h10l3-2h16a1 1 0 0 1 1 1v20a2 2 0 0 1-2 2H2a2 2 0 0 1-2-2z" fill="url(#g-fold)"/><path d="M5 28v-4a3 3 0 0 1 3-3h14a3 3 0 0 1 3 3v4z" fill="#1173cc"/><path d="M9 24.500h12" stroke="#0a4e96" stroke-width="1.500"/></svg></button>
    <button aria-label="Клиент VPN"><svg width="30" height="30" viewBox="0 0 30 30"><circle cx="15" cy="15" r="11" fill="none" stroke="#17684a" stroke-width="7"/><path d="M4 13a11 11 0 0 0 7 12.500" fill="none" stroke="#7cc49f" stroke-width="7"/><path d="M7 7a11 11 0 0 1 15-1" fill="none" stroke="#0b0b0b" stroke-width="6"/><circle cx="15" cy="15" r="14.300" fill="none" stroke="#e6eee9"/><circle cx="15" cy="15" r="7.500" fill="#20273a" stroke="#dfe8e3" stroke-width="1.500"/></svg></button>
    <button aria-label="Менеджер паролей"><svg width="28" height="30" viewBox="0 0 28 30"><path d="M14 1l12 7v14l-12 7-12-7V8z" fill="url(#g-key)" stroke="#27d79a" stroke-width="1.500" stroke-linejoin="round"/><circle cx="14" cy="10.500" r="4.500" fill="#3be3ad" stroke="#0c5a3e" stroke-width="1.600"/><path d="M12.500 15v7l1.500 1.500 1.500-1.500v-7" fill="#3be3ad" stroke="#0c5a3e" stroke-width="1.300"/><circle cx="14" cy="9.500" r="1.300" fill="#0c5a3e"/></svg></button>
    <button class="idle" aria-label="Записки"><svg width="27" height="27" viewBox="0 0 27 27"><path d="M0 2a1 1 0 0 1 1-1h25a1 1 0 0 1 1 1v13L14 27H1a1 1 0 0 1-1-1z" fill="#fdd500"/><path d="M14 14h13L14 27z" fill="#4a4a4a"/><path d="M27 14v11a2 2 0 0 1-2 2H14z" fill="#f7b21a"/></svg></button>
    <button class="alert" aria-label="WinSCP"><svg width="32" height="32" viewBox="0 0 32 32"><path d="M1 1h10L8 4l5 6-3 3-5-6-4 4z" fill="#2fb5ea" stroke="#bfeaff" stroke-width=".8"/><path d="M12 14V9a5 5 0 0 1 10 0v5" fill="none" stroke="#d8d8da" stroke-width="3"/><rect x="8" y="13" width="17" height="12" rx="1" fill="#c3c3c7" stroke="#eee"/><path d="M17.500 16v5" stroke="#333" stroke-width="2.500"/><path d="M31 31H20l3-3-6-6 4-4 6 6 4-4z" fill="#6fd21f" stroke="#2f8a0c" stroke-width=".8"/></svg></button>
  </div>
  <div class="tray">
    <svg width="16" height="10" viewBox="0 0 16 10"><path d="M2 8l6-6 6 6" fill="none" stroke="#fff" stroke-width="1.800"/></svg>
    <span class="lang">РУС</span>
    <svg width="20" height="16" viewBox="0 0 20 16"><g fill="none" stroke="#fff" stroke-width="1.500"><path d="M1 5.500c5-5 13-5 18 0M4 8.500c3.500-3.500 8.500-3.500 12 0M7 11.500c2-2 4-2 6 0"/></g><circle cx="10" cy="13.500" r="1.800" fill="#fff"/></svg>
    <svg width="20" height="18" viewBox="0 0 20 18"><path d="M1 6.500h3L9 2v14l-5-4.500H1z" fill="none" stroke="#fff" stroke-width="1.500"/><path d="M11.500 6.500c1.200 1.500 1.200 3.500 0 5M14 4c2.600 3 2.600 7 0 10" fill="none" stroke="#fff" stroke-width="1.400"/><path d="M16.500 2c3.500 4 3.500 10 0 14" fill="none" stroke="#666b75"/></svg>
    <svg width="22" height="18" viewBox="0 0 22 18"><rect x="2.500" y="4.500" width="15.500" height="11" rx="2.500" fill="none" stroke="#fff" stroke-width="1.400"/><rect x="5" y="7" width="10.500" height="6" fill="#fff"/><path d="M19 8v4h1.500V8z" fill="#fff" stroke="#fff"/><path d="M4.500 0L0 7h3l-1 5 5-7H4.500z" fill="#fff" stroke="#1c222b"/></svg>
    <div class="clock"><time>14:59</time><time>11.11.2025</time></div>
  </div>
</footer>
</body>
</html>
```

FILE: styles.css
```css
* { box-sizing: border-box; }
body {
  margin: 0;
  height: 100vh;
  display: flex;
  flex-direction: column;
  overflow: hidden;
  font-family: "Open Sans", "Noto Sans", sans-serif;
  font-size: 14px;
  color: #3c4043;
}
button { font: inherit; color: inherit; border: 0; background: none; padding: 0; }
svg { display: block; flex: none; }
.defs { position: absolute; }
a { color: inherit; text-decoration: none; }

/* browser window */
.chrome { background: #e0e0e0; flex: none; }
.tabstrip { height: 50px; display: flex; align-items: center; padding-left: 8px; }
.tabsearch { width: 34px; height: 34px; border-radius: 11px; background: #fff; display: grid; place-items: center; flex: none; margin-right: 8px; }
.tabs { display: flex; align-self: stretch; align-items: flex-end; flex: 0 1 1598px; min-width: 0; }
.tab { flex: 1 1 0; min-width: 0; display: flex; align-items: center; gap: 10px; height: 34px; margin-bottom: 8px; margin-right: 4px; padding: 0 18px 0 10px; border-radius: 10px; background: #dee1e6; position: relative; }
.tab::after { content: ""; position: absolute; right: -3px; top: 7px; width: 2px; height: 20px; background: #fff; }
.tab.last::after, .tab.active::after { display: none; }
.tab span { flex: 1; overflow: hidden; white-space: nowrap; mask-image: linear-gradient(90deg, #000 85%, transparent); }
.tab.active { height: 42px; margin-bottom: 0; padding-bottom: 8px; background: #fff; border-radius: 10px 10px 0 0; }
.dark { color: #111; }
.newtab { width: 34px; height: 34px; border-radius: 50%; background: #dee1e6; display: grid; place-items: center; flex: none; }
.winbtns { margin-left: auto; display: flex; flex: none; }
.winbtns button { width: 57px; height: 40px; display: grid; place-items: center; }

.toolbar { height: 58px; background: #fff; border-radius: 10px 10px 0 0; display: flex; align-items: center; padding-left: 5px; }
.nav { display: flex; margin-right: 10px; }
.nav button, .exts button { width: 45px; height: 40px; display: grid; place-items: center; flex: none; }
.omnibox { flex: 1; min-width: 0; height: 42px; border-radius: 21px; background: #e9ebed; display: flex; align-items: center; padding: 0 10px 0 7px; }
.insecure { height: 30px; width: 138px; border-radius: 15px; background: #fff; color: #202124; font-weight: 600; display: flex; align-items: center; justify-content: center; gap: 6px; white-space: nowrap; }
.url { flex: 1; margin-left: 10px; font-size: 17px; color: #5f6368; white-space: nowrap; overflow: hidden; }
.url b { font-weight: 400; color: #202124; }
.omnibox > button:not(.insecure) { width: 40px; display: grid; place-items: center; }
.exts { display: flex; flex: none; }
.exts:nth-of-type(3) { margin-left: 11px; }
.vline { width: 3px; height: 20px; background: #dee1e6; flex: none; }
.toolbar .vline { margin: 0 10px 0 9px; }
.exts:last-child { margin-right: 5px; }
.abp span { width: 21px; height: 20px; background: #f01d3c; color: #fff; font: 700 9px/20px "Open Sans", sans-serif; clip-path: polygon(30% 0, 70% 0, 100% 30%, 100% 70%, 70% 100%, 30% 100%, 0 70%, 0 30%); }

.bookmarks { height: 43px; background: #fff; border-bottom: 1px solid #dcdcdc; display: flex; align-items: center; padding: 0 39px 10px 15px; }
.bookmarks .vline { margin: 0 18px 0 19px; }
.marks { display: flex; gap: 22px; flex: 1; min-width: 0; overflow: hidden; }
.marks a { display: flex; align-items: center; gap: 7px; white-space: nowrap; }
.marks .wide { min-width: 171px; }

/* page inside the browser */
.viewport { flex: 1; min-height: 0; position: relative; overflow: hidden; background: #fff; font: 16px/19px "Liberation Sans", Arial, sans-serif; color: #404040; }
.luci { isolation: isolate; }
.wrap { width: 1175px; max-width: 96%; margin: 0 auto; }
.navbar { height: 50px; background: linear-gradient(#333, #222); font-size: 24px; line-height: 44px; color: #fff; position: relative; z-index: 1; }
.luci h3 { margin: 0; font-size: 24px; line-height: 36px; white-space: nowrap; }
.luci h3.offload { margin-top: -20px; }
.descr { margin: 9px 0 76px; line-height: 20px; }
.zones { width: 100%; border-collapse: collapse; margin-top: 5px; }
.zones tr { border-top: 1px solid #ccc; }
.zones th { background: #f5f5f5; text-align: left; vertical-align: top; padding: 13px; color: #806040; }
.zones td { padding: 0 13px; }
.zones td:last-child { text-align: right; }
.h62 { height: 62px; }
.h69 { height: 69px; }
.h74 { height: 74px; }
.h97 { height: 97px; }
.zone { display: inline-block; padding: 0 4px; border-radius: 3px; }
.lan { background: #90f090; }
.wan { background: #f09090; }
.guest { background: #f0c090; }
.dream { background: #d0f090; }
.other { background: #e0c0a0; }
.del, .add { height: 35px; padding: 0 18px; border: 1px solid #c21; border-radius: 4px; color: #c21; background: #fff; }
.add { border-color: #1a9c5c; color: #1a9c5c; }
.addrow { padding: 21px 12px 0; height: 68px; }
.actions { height: 79px; background: #f5f5f5; border-top: 1px solid #ccc; display: flex; justify-content: flex-end; align-items: center; padding-right: 24px; }
.luci footer { margin: 23px 6px 0; border-top: 1px solid #ddd; padding-top: 22px; }
.luci footer .wrap { color: #777; }

.overlay { position: absolute; inset: 0 19px 0 0; background: rgba(0, 0, 0, .7); }
.modal { width: 1125px; max-width: 96%; height: 100%; margin: 0 auto; overflow: hidden; padding: 12px 11px 0; background: #fff; box-shadow: 0 0 4px 1px #aaa; }
.cbi-tabs { list-style: none; margin: 0 0 22px; padding: 0 5px; display: flex; gap: 5px; border-bottom: 1px solid #ddd; }
.cbi-tabs li { height: 30px; border: 1px solid #ddd; border-bottom: 0; border-radius: 4px 4px 0 0; background: #eee; padding: 5px 8px; white-space: nowrap; }
.cbi-tabs .on { background: #fff; color: #1976d2; margin-bottom: -1px; height: 31px; }
.text { margin: 0 18px 23px 6px; }
.row { display: grid; grid-template-columns: 231px 1fr; column-gap: 25px; margin-bottom: 23px; align-items: start; }
.row > label, .row > .label { text-align: right; line-height: 22px; padding-top: 8px; min-height: 37px; }
.ctl { width: 263px; height: 37px; border: 1px solid #ccc; border-radius: 4px; background: #fff; color: #404040; font: 16px/19px "Liberation Sans", Arial, sans-serif; padding: 0 5px; }
select.ctl { padding: 0 4px 0 6px; }
.row input[type=checkbox] { appearance: none; display: block; width: 18px; height: 18px; margin: 10px 0 0; border: 1px solid #ccc; border-radius: 3px; background: #fafafa; }
.row input[type=checkbox]:checked { background: #fafafa url("data:image/svg+xml,%3Csvg xmlns='http://www.w3.org/2000/svg' viewBox='0 0 16 16'%3E%3Cpath d='M3 8l3.500 4L13 4' fill='none' stroke='%23333' stroke-width='2.500'/%3E%3C/svg%3E"); }
.help { margin: 13px 0 0; display: flex; gap: 3px; }
abbr { text-decoration: underline dotted; text-underline-offset: 3px; }
.dd { display: flex; align-items: center; padding: 0 8px 0 4px; background: linear-gradient(#fff, #eaeaea); text-align: left; }
.badge { display: flex; align-items: center; gap: 7px; height: 28px; padding: 0 4px 0 3px; border: 1px solid #ccc; border-radius: 5px; background: #fff; white-space: nowrap; }
.tri { margin-left: auto; border: 3px solid transparent; border-top: 6px solid #333; border-bottom: 0; }
.none { flex: 1; text-align: center; color: #888; padding-right: 16px; }
.none + .tri { margin-left: 0; }
.zonebadge { display: flex; align-items: center; gap: 5px; height: 32px; padding: 0 1px 0 6px; border-radius: 5px; background: #d5f69a; font-weight: 700; }
.zonebadge .badge { border-color: #000; padding-right: 6px; }
.text.second { margin-bottom: 22px; }
.tall .ctl { height: 38px; }
.buttons { display: flex; justify-content: space-between; padding: 6px 6px 0; }
.btn { height: 36px; padding: 0 18px; border: 1px solid #ccc; border-radius: 4px; background: linear-gradient(#fff, #e6e6e6); }
.btn.save { border: 0; background: linear-gradient(#00a048, #007a38); color: #fff; font-weight: 700; padding: 0 16px; }

.scrollbar { position: absolute; inset: 0 0 0 auto; width: 19px; background: #fcfcfc; display: flex; flex-direction: column; align-items: center; padding: 6px 0; }
.up, .down { border: 6px solid transparent; flex: none; }
.up { border-top: 0; border-bottom: 9px solid #8a8a8a; }
.down { border-bottom: 0; border-top: 9px solid #8a8a8a; }
.thumb { width: 11px; flex: 650 1 0; margin: 101px 0 89px; border-radius: 6px; background: #8a8a8a; }
.cursor { position: absolute; left: 1367px; top: 603px; }

/* taskbar */
.taskbar { height: 60px; flex: none; border-top: 1px solid #3a4252; background: linear-gradient(90deg, #1c222a 0, #1b222e 9%, #15214a 20%, #131f5a 35%, #15205c 45%, #1b2040 49%, #14215a 56%, #14215a 65%, #1a2238 75%, #1c222b 82%, #1c222b 100%); color: #fff; display: flex; align-items: center; padding-left: 223px; }
.apps-row { display: flex; align-items: center; gap: 5px; }
.apps-row button { width: 50px; height: 50px; border-radius: 5px; display: grid; place-items: center; position: relative; flex: none; }
.apps-row .start { margin-right: 2px; }
.search { width: 275px; height: 40px; border-radius: 20px; border: 1px solid #4b5678; background: linear-gradient(90deg, #343a48, #2f3c68); display: flex; align-items: center; gap: 11px; padding: 0 5px 0 14px; }
.search input { flex: 1; width: 40px; min-width: 0; border: 0; background: none; font: 17px "Open Sans", sans-serif; padding: 0; color: #fff; outline: 0; }
.search input::placeholder { color: #d4d7e0; }
.running::after, .idle::after, .alert::after { content: ""; position: absolute; bottom: 1px; width: 20px; height: 4px; border-radius: 2px; background: #4cc2ff; }
.idle::after { width: 8px; background: #8b8f98; }
.alert::after { width: 40px; background: #ff99a4; }
.apps-row .running { background: #2a2f5c; border: 1px solid #3a3d66; }
.apps-row .alert { background: #84424c; }
.light { color: #fff; }
.wa span { position: absolute; right: 5px; top: 4px; width: 20px; height: 20px; border-radius: 50%; background: #4cc2ff; color: #111; font-size: 13px; line-height: 20px; text-align: center; }
.tray { margin-left: auto; display: flex; align-items: center; padding-right: 24px; }
.lang { margin: 0 25px 0 27px; }
.tray svg + svg { margin-left: 10px; }
.clock { display: flex; flex-direction: column; align-items: flex-end; line-height: 20px; margin-left: 18px; }
```
